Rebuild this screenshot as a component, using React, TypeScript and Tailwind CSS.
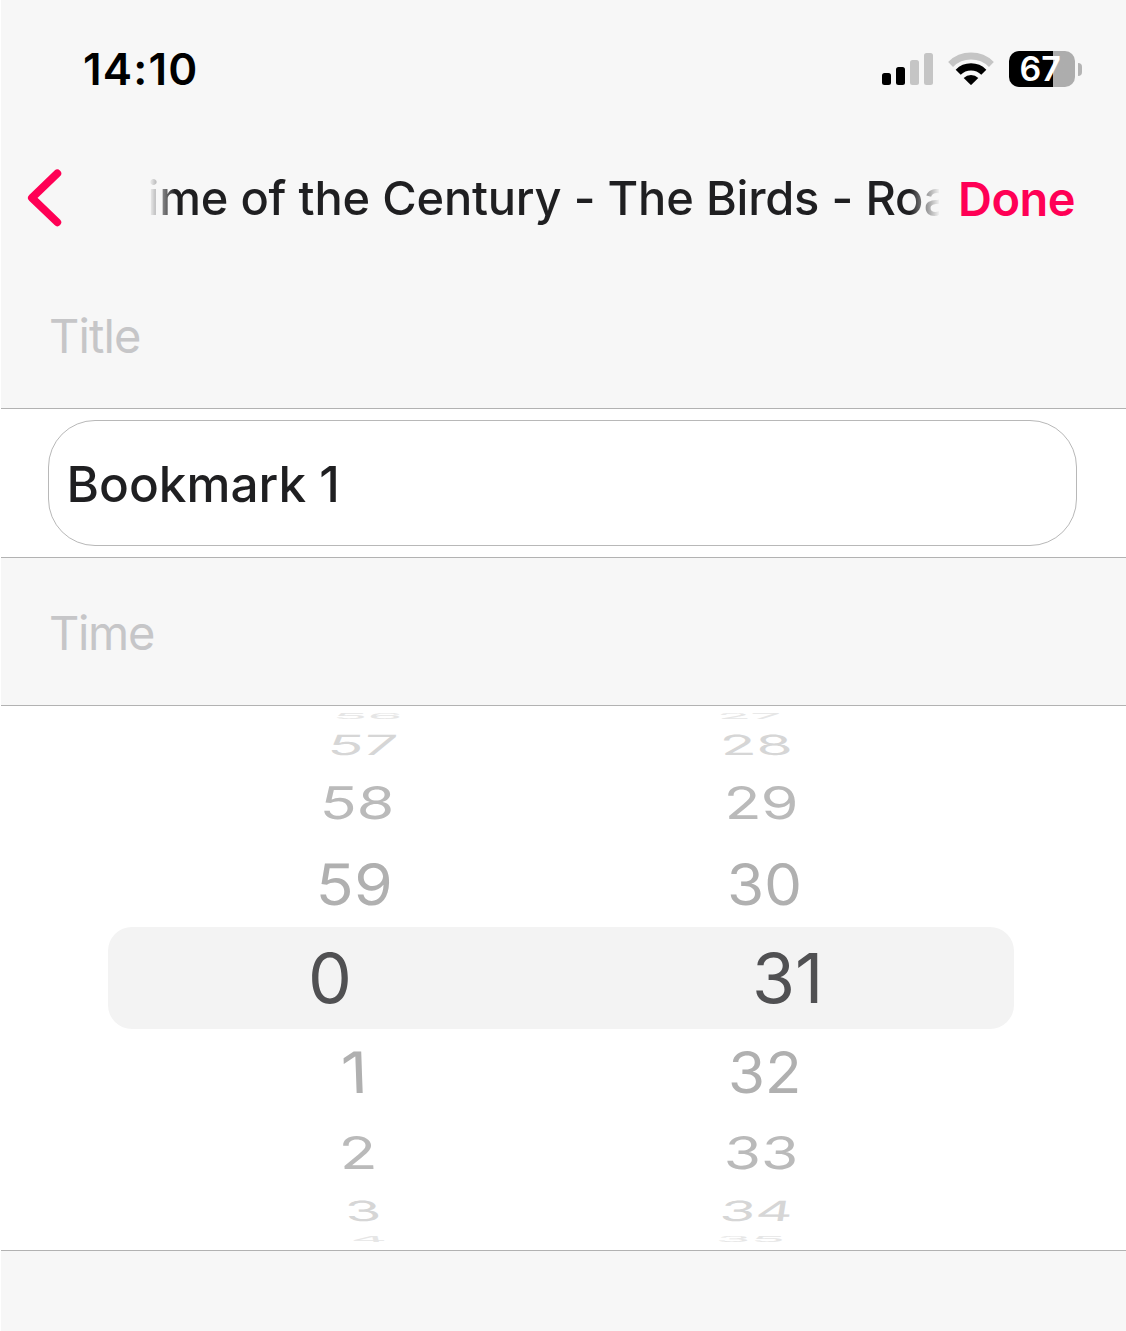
type Item = { label: string; x: number; sx: number; skew: number };
type Row = { height: string; tone: string; sy: number; minute: Item; second: Item };

// The wheel is foreshortened towards its top and bottom edges.
const rows: Row[] = [
  { height: 'h-5', tone: 'text-[#e6e6e6]', sy: 0.12, minute: { label: '56', x: 333, sx: 0.825, skew: -14 }, second: { label: '27', x: 716.5, sx: 0.8, skew: 14 } },
  { height: 'h-[38px]', tone: 'text-[#d6d6d6]', sy: 0.405, minute: { label: '57', x: 328, sx: 0.855, skew: -9 }, second: { label: '28', x: 719.5, sx: 0.855, skew: 6 } },
  { height: 'h-[78px]', tone: 'text-[#bababa]', sy: 0.65, minute: { label: '58', x: 320, sx: 0.883, skew: -4 }, second: { label: '29', x: 723.7, sx: 0.88, skew: 3 } },
  { height: 'h-[84px]', tone: 'text-[#b0b0b0]', sy: 0.825, minute: { label: '59', x: 315.7, sx: 0.905, skew: -2 }, second: { label: '30', x: 727, sx: 0.87, skew: 1 } },
  { height: 'h-[102px]', tone: 'text-[#505052]', sy: 1, minute: { label: '0', x: 307.8, sx: 1.01, skew: 0 }, second: { label: '31', x: 751.6, sx: 1.01, skew: 0 } },
  { height: 'h-[86px]', tone: 'text-[#b0b0b0]', sy: 0.825, minute: { label: '1', x: 341, sx: 0.95, skew: 2 }, second: { label: '32', x: 727.8, sx: 0.87, skew: -1 } },
  { height: 'h-[76px]', tone: 'text-[#bababa]', sy: 0.65, minute: { label: '2', x: 338.6, sx: 0.9, skew: 4 }, second: { label: '33', x: 724, sx: 0.875, skew: -3 } },
  { height: 'h-10', tone: 'text-[#d6d6d6]', sy: 0.405, minute: { label: '3', x: 345, sx: 0.85, skew: 6 }, second: { label: '34', x: 720, sx: 0.84, skew: -9 } },
  { height: 'h-4', tone: 'text-[#e6e6e6]', sy: 0.12, minute: { label: '4', x: 350, sx: 0.83, skew: 14 }, second: { label: '35', x: 716, sx: 0.82, skew: -14 } },
];

function WheelCell({ item, start, sy }: { item: Item; start: number; sy: number }) {
  return (
    <div className="flex h-full flex-1 items-center">
      <span
        className="block origin-left text-[69px] leading-none whitespace-nowrap"
        style={{ marginLeft: item.x - start, transform: `skewX(${item.skew}deg) scale(${item.sx}, ${sy})` }}
      >
        {item.label}
      </span>
    </div>
  );
}

function Signal() {
  return (
    <div className="mb-[1px] flex h-8 items-end gap-[4.6px]">
      <div className="h-3 w-[9.3px] rounded-[2.5px] bg-black" />
      <div className="h-[18px] w-[9.3px] rounded-[2.5px] bg-black" />
      <div className="h-[25px] w-[9.3px] rounded-[2.5px] bg-[#c5c5c5]" />
      <div className="h-8 w-[9.3px] rounded-[2.5px] bg-[#c5c5c5]" />
    </div>
  );
}

function Wifi() {
  return (
    <svg className="ml-[15px] h-[34px] w-[46px]" viewBox="0 0 46 34" fill="none">
      <path d="M2.6 12.4A29.2 29.2 0 0 1 43.4 12.4" stroke="#c5c5c5" strokeWidth="7" />
      <path d="M10.2 20.2A18.2 18.2 0 0 1 35.8 20.2" stroke="#000" strokeWidth="7.2" />
      <path d="M15.7 25.9A10.6 10.6 0 0 1 30.3 25.9L23.7 32.6Q23 33.3 22.3 32.6Z" fill="#000" />
    </svg>
  );
}

function Battery() {
  return (
    <div className="ml-[15px] flex items-center">
      <div className="flex h-9 w-[66px] items-center rounded-[10px] bg-linear-to-r from-black from-[44px] to-[#adadad] to-[44px] pl-[10.6px]">
        <span className="text-[34px] leading-none font-semibold text-white">67</span>
      </div>
      <div className="ml-[3px] h-[13px] w-1 rounded-r-full bg-[#b4b4b4]" />
    </div>
  );
}

export default function App() {
  return (
    <div className="h-[1331px] w-[1126px] overflow-hidden bg-white pl-px font-['Inter',sans-serif]">
      <div className="flex h-full flex-col bg-[#f7f7f7]">
        <div className="flex h-[138px] items-center justify-between pr-[44px] pl-[82px]">
          <span className="text-[44px] leading-none font-semibold tracking-[1.15px] text-black">14:10</span>
          <div className="flex items-center">
            <Signal />
            <Wifi />
            <Battery />
          </div>
        </div>

        <header className="flex h-[120px] items-center">
          <svg className="ml-[26px] h-[60px] w-[36px] shrink-0" viewBox="0 0 36 60" fill="none">
            <path d="M30.3 5.4L4.9 29.9L30.3 54.3" stroke="#ff0055" strokeWidth="7.8" strokeLinecap="round" strokeLinejoin="round" />
          </svg>
          <h1 className="ml-[83px] w-[793px] shrink-0 overflow-hidden pl-[1.5px] text-[47px] leading-[70px] font-medium tracking-[-0.2px] whitespace-nowrap text-[#1f1f21] [mask-image:linear-gradient(to_right,transparent_3px,black_29px,black_764px,transparent_794px)]">
            ime of the Century - The Birds - Roa
          </h1>
          <button className="ml-[19px] text-[47px] leading-none font-semibold tracking-[-0.5px] text-[#ff0055]">Done</button>
        </header>

        <div className="flex h-[151px] items-center border-b border-[#b2b2b2] pt-[5px] pl-[48px]">
          <span className="text-[47px] leading-none tracking-[-0.9px] text-[#c6c6c8]">Title</span>
        </div>

        <div className="flex h-[149px] items-center border-b border-[#b2b2b2] bg-white pl-[47px]">
          <div className="flex h-[126px] w-[1029px] items-center rounded-[47px] border border-[#b8b8b8] pt-[4px] pl-[17.5px]">
            <span className="text-[49.5px] leading-none font-medium text-[#1f1f21]">Bookmark 1</span>
          </div>
        </div>

        <div className="flex h-[148px] items-center border-b border-[#b2b2b2] pt-[2px] pl-[48px]">
          <span className="text-[47px] leading-none tracking-[-1.3px] text-[#c6c6c8]">Time</span>
        </div>

        <div className="h-[545px] overflow-hidden border-b border-[#b2b2b2] bg-white pr-[112px] pl-[107px]">
          {rows.map((row) => (
            <div
              key={row.minute.label}
              className={`flex ${row.height} ${row.tone} ${row.minute.label === '0' ? 'mt-px rounded-[24px] bg-[#f3f3f3]' : ''}`}
            >
              <WheelCell item={row.minute} start={108} sy={row.sy} />
              <WheelCell item={row.second} start={561} sy={row.sy} />
            </div>
          ))}
        </div>
      </div>
    </div>
  );
}
